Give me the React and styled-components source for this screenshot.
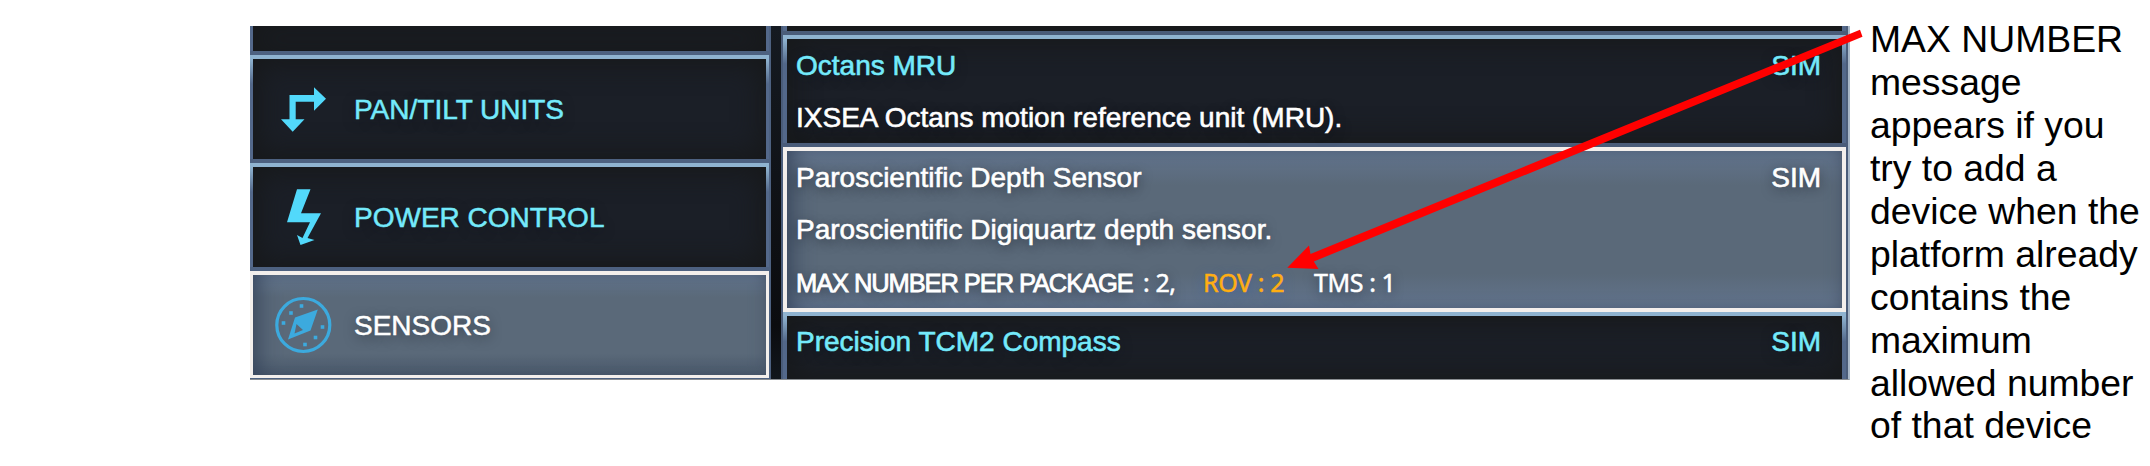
import React from 'react';
import styled, { createGlobalStyle, css } from 'styled-components';

const Global = createGlobalStyle`
  body { margin: 0; background: #fff; font-family: "Liberation Sans", Arial, sans-serif; }
`;

const Page = styled.div`
  position: relative;
  box-sizing: border-box;
  width: 2150px;
  height: 466px;
  padding: 26px 0 0 250px;
  display: flex;
  align-items: flex-start;
  overflow: hidden;
`;

const Screen = styled.div`
  box-sizing: border-box;
  width: 1600px;
  height: 354px;
  display: flex;
  gap: 10px;
  overflow: hidden;
  background: linear-gradient(#151a21, #0b0c0f 85%, #11161c);
  border-right: 2px solid #a9b8c8;
  border-bottom: 1px solid #8a8e92;
`;

const Menu = styled.nav`
  width: 519px;
  flex: none;
  border-right: 2px solid #4d6180;
  background: #4d6180;
  display: flex;
  flex-direction: column;
`;

const frame = css`
  box-sizing: border-box;
  border: 0 solid #f3efec;
  ${({ $active }) =>
    $active
      ? css`
          background: linear-gradient(#62748d 0, #5a6979 22%, #5a6979 78%, ${({ $foot = '#4b5a6c' }) => $foot} 100%);
          box-shadow: inset 14px 0 22px -10px #35435a, inset -10px 0 16px -10px #48566a;
        `
      : css`
          background: #1b1f27;
          border-image: linear-gradient(#8fb3d0 4px, #53688a 28px) 4;
          box-shadow: inset 0 0 26px 6px #17191b;
        `}
`;

const MenuItem = styled.div`
  ${frame}
  flex: none;
  height: ${({ $h }) => $h}px;
  margin-bottom: 4px;
  border-width: ${({ $active, $cut }) =>
    $cut ? '0 3px' : $active ? '4px 3px 3px' : '4px 3px 0'};
  ${({ $cut }) => $cut && 'border-image: none; border-color: #53688a;'}
  display: flex;
  align-items: center;
  color: ${({ $active }) => ($active ? '#fff' : '#74eafb')};
  font-size: 28px;
`;

const Label = styled.span`
  padding: 2px 0 0 1px;
  -webkit-text-stroke: 0.5px currentColor;
  text-shadow: 0 3px 12px rgba(15, 20, 30, 0.5);
`;

const IconBox = styled.span`
  width: 100px;
  height: 100px;
  flex: none;
  display: flex;
`;

const List = styled.div`
  flex: 1;
  padding: 0 2px;
  background: #4a5c79;
  display: flex;
  flex-direction: column;
`;

const Device = styled.div`
  ${frame}
  flex: none;
  height: ${({ $h }) => $h}px;
  margin-bottom: ${({ $gap = 0 }) => $gap}px;
  border-width: ${({ $active, $cut }) =>
    $cut ? '0 4px' : $active ? '4px' : '4px 4px 0'};
  ${({ $cut }) => $cut && 'border-image: none; border-color: #53688a;'}
  padding: ${({ $top = 0 }) => $top}px 21px 0 9px;
`;

const Line = styled.div`
  display: flex;
  justify-content: space-between;
  height: 52px;
  line-height: 32px;
  font-size: 28px;
  white-space: nowrap;
  color: ${({ $tone }) => ($tone === 'title' ? '#74eafb' : '#fff')};
  -webkit-text-stroke: 0.6px currentColor;
  text-shadow: 0 3px 12px rgba(15, 20, 30, 0.6);
`;

const Limits = styled.div`
  display: flex;
  align-items: baseline;
  height: 34px;
  line-height: 32px;
  white-space: pre;
  -webkit-text-stroke: 0.5px currentColor;
`;

const Limit = styled.span`
  flex: none;
  width: ${({ $w }) => $w}px;
  font-size: 25px;
  letter-spacing: -0.4px;
  font-family: "Noto Sans", sans-serif;
  color: ${({ $over }) => ($over ? '#ffae12' : '#fff')};
  text-shadow: 0 3px 12px ${({ $over }) => ($over ? '#3a62a5' : 'rgba(15, 20, 30, 0.6)')};
`;

const LimitTitle = styled(Limit)`
  font-family: "Liberation Sans", Arial, sans-serif;
  font-size: 25.5px;
  letter-spacing: -1.1px;
  -webkit-text-stroke: 0.8px currentColor;
`;

const Note = styled.p`
  margin: -8px 0 0 20px;
  width: 275px;
  font-size: 37.33px;
  line-height: 42.93px;
  white-space: nowrap;
  color: #000;
`;

const Pointer = styled.svg`
  position: absolute;
  left: 0;
  top: 0;
`;

const PanTilt = () => (
  <svg width="100" height="100" viewBox="0 0 100 100" fill="#52d9fb">
    <path d="M36.5 36H61V28.3L73 39.7L61 51.7V42.7H42.7V60.3H51.5L39.7 72.7L28 60.3H36.5Z" />
  </svg>
);

const Power = () => (
  <svg width="100" height="100" viewBox="0 0 100 100" fill="#52d9fb">
    <path d="M44 22.3H57.5L48 46.3H68L54.5 71L61.5 73L47.5 78L44 68L49.5 71L57 55.3H34Z" />
  </svg>
);

const Compass = () => (
  <svg width="100" height="100" viewBox="0 0 100 100" fill="#3caade">
    <circle cx="50.3" cy="50" r="26.5" fill="none" stroke="#3caade" strokeWidth="3.2" />
    <path
      fillRule="evenodd"
      d="M64.8 34.5L57.5 55.5L35 64.5L42 42.5ZM43.5 49L41.5 58.5L50 55Z"
    />
    {[[48.5, 31], [38, 38], [30.5, 48], [69.5, 52], [62.5, 62.5], [52, 69.5]].map(([x, y]) => (
      <rect key={x} x={x - 1.8} y={y - 1.8} width="3.6" height="3.6" />
    ))}
  </svg>
);

const noteLines = [
  'MAX NUMBER', 'message', 'appears if you', 'try to add a', 'device when the',
  'platform already', 'contains the', 'maximum', 'allowed number', 'of that device',
];

export default function App() {
  return (
    <Page>
      <Global />
      <Screen>
        <Menu>
          <MenuItem $h={25} $cut />
          <MenuItem $h={104}><IconBox><PanTilt /></IconBox><Label>PAN/TILT UNITS</Label></MenuItem>
          <MenuItem $h={104}><IconBox><Power /></IconBox><Label>POWER CONTROL</Label></MenuItem>
          <MenuItem $h={107} $active><IconBox><Compass /></IconBox><Label>SENSORS</Label></MenuItem>
        </Menu>
        <List>
          <Device $h={5} $gap={4} $cut />
          <Device $h={108} $gap={4} $top={11}>
            <Line $tone="title"><span>Octans MRU</span><span>SIM</span></Line>
            <Line>IXSEA Octans motion reference unit (MRU).</Line>
          </Device>
          <Device $h={165} $active $foot="#62748d" $top={11}>
            <Line><span>Paroscientific Depth Sensor</span><span>SIM</span></Line>
            <Line>Paroscientific Digiquartz depth sensor.</Line>
            <Limits>
              <LimitTitle $w={347}>MAX NUMBER PER PACKAGE</LimitTitle>
              <Limit $w={60}>: 2,</Limit>
              <Limit $over $w={111}>ROV : 2</Limit>
              <Limit $w={90}>TMS : 1</Limit>
            </Limits>
          </Device>
          <Device $h={68} $top={10}>
            <Line $tone="title"><span>Precision TCM2 Compass</span><span>SIM</span></Line>
          </Device>
        </List>
      </Screen>
      <Note>{noteLines.map((l) => <React.Fragment key={l}>{l}<br /></React.Fragment>)}</Note>
      <Pointer width="2150" height="466" viewBox="0 0 2150 466" fill="#f00">
        <path d="M1860 29.7L1862.5 36.8L1313.8 261.5L1318.5 269L1287.3 267.7L1309 245.5L1310.5 254Z" />
      </Pointer>
    </Page>
  );
}
